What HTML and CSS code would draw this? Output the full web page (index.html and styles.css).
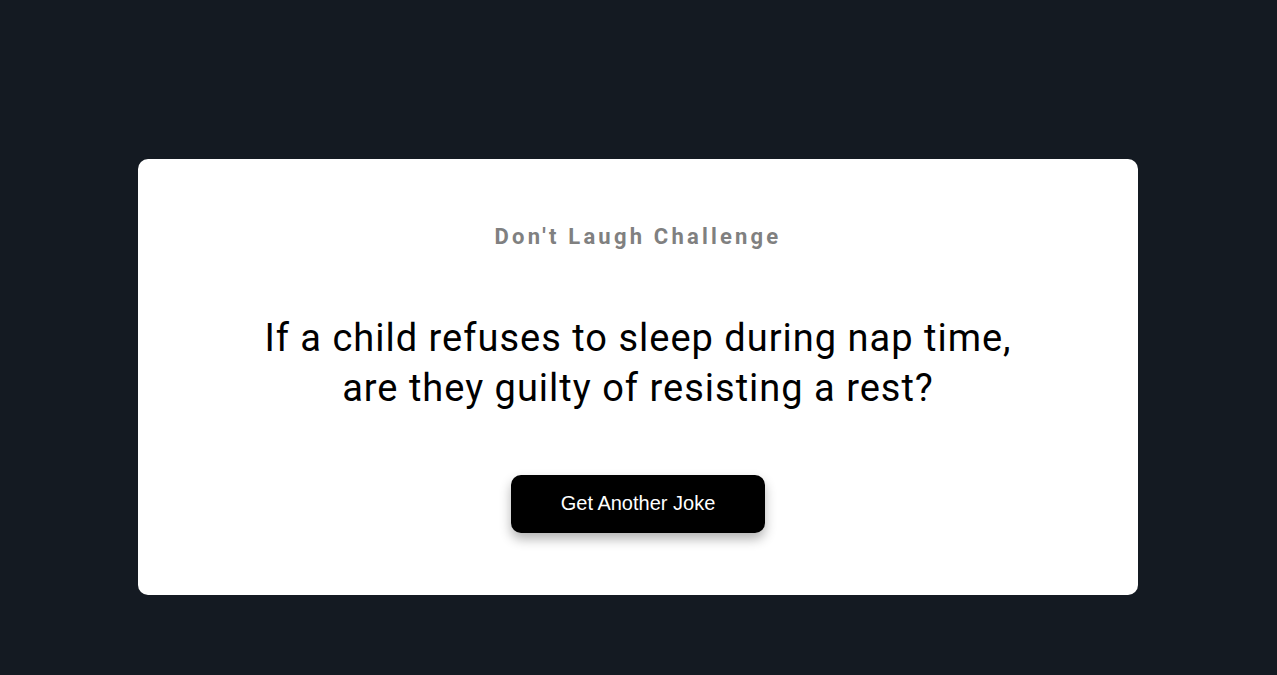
FILE: index.html
```html
<!DOCTYPE html>
<html lang="en">
<head>
<meta charset="utf-8">
<title>Don't Laugh Challenge</title>
<link rel="stylesheet" href="styles.css">
</head>
<body>
<main class="page">
  <section class="card">
    <h3 class="title">Don't Laugh Challenge</h3>
    <p class="joke">If a child refuses to sleep during nap time,<br>are they guilty of resisting a rest?</p>
    <button class="btn" type="button">Get Another Joke</button>
  </section>
</main>
</body>
</html>
```
FILE: styles.css
```css
* { box-sizing: border-box; }
html, body { margin: 0; padding: 0; }
body {
  background: #141a22;
  font-family: Roboto, "Liberation Sans", sans-serif;
}
.page {
  min-height: 100vh;
  padding-top: 79px;
  display: flex;
  align-items: center;
  justify-content: center;
}
.card {
  width: 1000px;
  margin-right: 1px;
  background: #ffffff;
  border-radius: 10px;
  padding: 65px 40px 62px;
  display: flex;
  flex-direction: column;
  align-items: center;
  text-align: center;
}
.title {
  margin: 0;
  font-size: 22px;
  line-height: 26px;
  font-weight: 700;
  letter-spacing: 3.2px;
  color: #808080;
}
.joke {
  margin: 63px 0 62px;
  font-size: 38px;
  line-height: 50px;
  letter-spacing: 1px;
  color: #000;
}
.btn {
  width: 254px;
  height: 58px;
  padding: 0 0 2px;
  border: none;
  border-radius: 10px;
  background: #000;
  color: #fff;
  font-family: "Liberation Sans", Arial, sans-serif;
  font-size: 20px;
  box-shadow: 0 6px 12px rgba(0, 0, 0, 0.3);
  cursor: pointer;
}
```
